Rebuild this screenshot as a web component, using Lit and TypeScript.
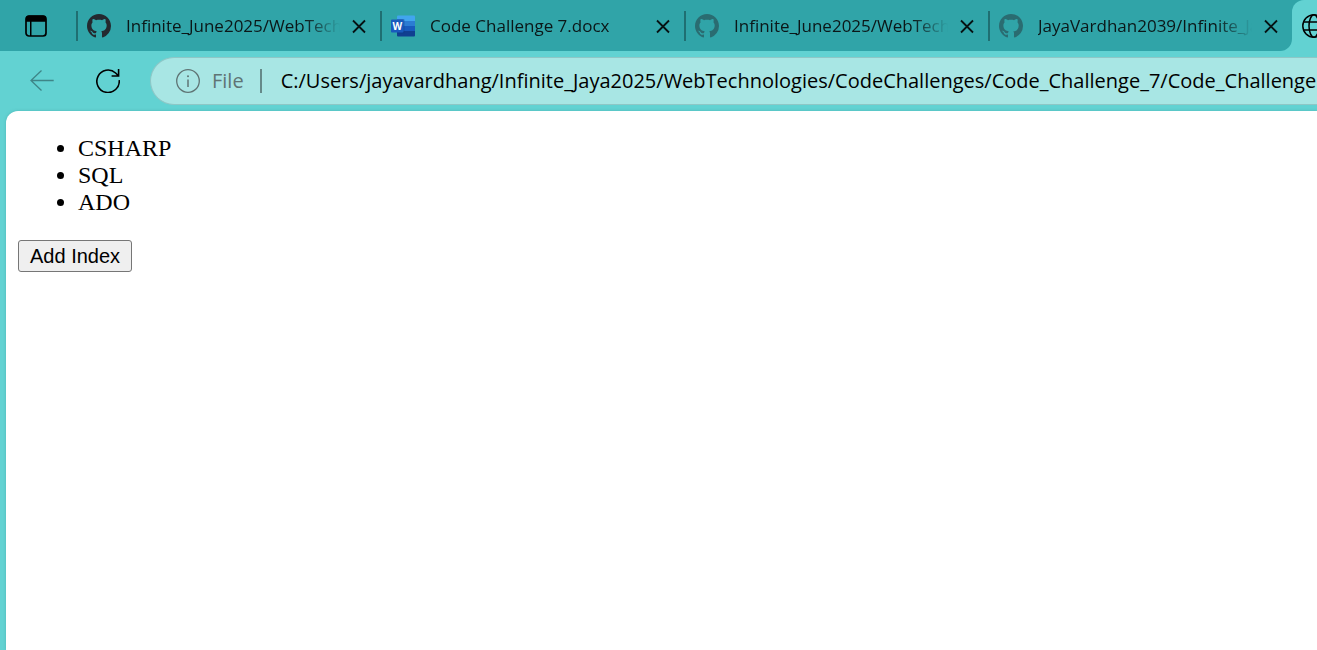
import { LitElement, html, css, svg } from "lit";
import { customElement, property, state } from "lit/decorators.js";
import { classMap } from "lit/directives/class-map.js";

const githubIcon = html`<svg class="favicon" viewBox="0 0 16 16" aria-hidden="true">
  <path
    fill="#24292f"
    d="M8 0C3.58 0 0 3.58 0 8c0 3.54 2.29 6.53 5.47 7.59.4.07.55-.17.55-.38 0-.19-.01-.82-.01-1.49-2.01.37-2.53-.49-2.69-.94-.09-.23-.48-.94-.82-1.13-.28-.15-.68-.52-.01-.53.63-.01 1.08.58 1.23.82.72 1.21 1.87.87 2.33.66.07-.52.28-.87.51-1.07-1.78-.2-3.64-.89-3.64-3.95 0-.87.31-1.59.82-2.15-.08-.2-.36-1.02.08-2.12 0 0 .67-.21 2.2.82.64-.18 1.32-.27 2-.27s1.36.09 2 .27c1.53-1.04 2.2-.82 2.2-.82.44 1.1.16 1.92.08 2.12.51.56.82 1.27.82 2.15 0 3.07-1.87 3.75-3.65 3.95.29.25.54.73.54 1.48 0 1.07-.01 1.93-.01 2.2 0 .21.15.46.55.38A8.01 8.01 0 0 0 16 8c0-4.42-3.58-8-8-8z"
  />
</svg>`;

const wordIcon = html`<svg class="favicon" viewBox="0 0 24 24" aria-hidden="true">
  <path fill="#41a5ee" d="M7 1.500h16a1 1 0 0 1 1 1v5H6v-5a1 1 0 0 1 1-1z" />
  <path fill="#2b7cd3" d="M6 7h18v5.500H6z" />
  <path fill="#185abd" d="M6 12h18v5H6z" />
  <path fill="#103f91" d="M6 17h18v4.500a1 1 0 0 1-1 1H7a1 1 0 0 1-1-1z" />
  <path fill="#0c3c82" opacity="0.400" d="M6 5h6.500a1 1 0 0 1 1 1v12.500a1 1 0 0 1-1 1H6z" />
  <rect fill="#185abd" y="5.500" width="12.500" height="13" rx="1" />
  <text x="6.250" y="15.500" text-anchor="middle" font-family="Open Sans, sans-serif" font-weight="700" font-size="10" fill="#fff">W</text>
</svg>`;

const stroke = (paths: unknown, size: string) => html`<svg
  class=${size}
  viewBox="0 0 24 24"
  fill="none"
  stroke="currentColor"
  aria-hidden="true"
>${paths}</svg>`;

const closeIcon = stroke(svg`<path stroke-width="1.800" d="M6 6.500l12 12M18 6.500l-12 12"/>`, "icon");
const backIcon = stroke(svg`<path stroke-width="1.300" d="M23.700 11.500H.8M11.500 1.500L1 11.500 11.500 21.500"/>`, "icon");
const reloadIcon = stroke(
  svg`<path stroke-width="1.600" d="M23.200 11.200A11.200 11.200 0 1 1 19.600 4L22.400 6.800M22.600 0v7h-7"/>`,
  "icon"
);
const infoIcon = stroke(
  svg`<circle cx="12" cy="12" r="11.300" stroke-width="1.300"/><path stroke-width="1.500" d="M12 10.500v7.500"/><circle cx="12" cy="7.300" r="1" fill="currentColor" stroke="none"/>`,
  "icon"
);
const globeIcon = stroke(
  svg`<g stroke-width="1.500"><circle cx="12" cy="12" r="11.200"/><ellipse cx="12" cy="12" rx="5" ry="11.200"/><path d="M1.800 8h20.400M1.800 16h20.400"/></g>`,
  "icon"
);
const panesIcon = html`<svg class="panes" viewBox="0 0 22 22" aria-hidden="true">
  <rect x="1" y="1" width="20" height="20" rx="3" fill="none" stroke="currentColor" stroke-width="1.700" />
  <path fill="currentColor" d="M1 6.800V3.500a3 3 0 0 1 3-3h14a3 3 0 0 1 3 3v3.300zM5 6h1.500v15H5z" />
</svg>`;

@customElement("browser-tab")
class BrowserTab extends LitElement {
  @property() label = "";
  @property() kind = "github";
  @property({ type: Boolean }) dim = false;

  static styles = css`
    :host {
      display: flex;
      flex: none;
      width: 304px;
      align-items: center;
      box-sizing: border-box;
      padding-right: 9px;
      gap: 7px;
    }
    .divider {
      width: 2px;
      height: 30px;
      background: #1f6f72;
    }
    .open {
      display: flex;
      flex: 1;
      min-width: 0;
      align-items: center;
      gap: 15px;
      padding: 0 0 0 2px;
      border: 0;
      background: none;
      color: #0b1718;
      font: 17px/26px "Open Sans", "Noto Sans", sans-serif;
      text-align: left;
    }
    .favicon {
      flex: none;
      width: 24px;
      height: 24px;
    }
    .dim .favicon {
      opacity: 0.45;
    }
    .label {
      flex: 1;
      min-width: 0;
      overflow: hidden;
      white-space: nowrap;
      mask-image: linear-gradient(to right, #000 calc(100% - 36px), transparent);
    }
    .close {
      display: flex;
      padding: 0;
      border: 0;
      background: none;
      color: #061213;
    }
    .icon {
      width: 24px;
      height: 24px;
    }
  `;

  render() {
    return html`<span class="divider"></span>
      <button class=${classMap({ open: true, dim: this.dim })}>
        ${this.kind === "word" ? wordIcon : githubIcon}<span class="label">${this.label}</span>
      </button>
      <button class="close" aria-label="Close tab">${closeIcon}</button>`;
  }
}

@customElement("app-root")
class AppRoot extends LitElement {
  @state() private items = ["CSHARP", "SQL", "ADO"];

  static styles = css`
    :host {
      display: flex;
      flex-direction: column;
      min-height: 100vh;
      overflow: hidden;
      background: #62d2d2;
      color: #000;
    }
    button {
      margin: 0;
    }
    .strip {
      display: flex;
      height: 51px;
    }
    .tabs {
      display: flex;
      flex: none;
      background: #30a4a8;
      border-radius: 0 0 12px 0;
    }
    .tool {
      display: flex;
      align-items: center;
      justify-content: center;
      padding: 0;
      border: 0;
      background: none;
      color: #000;
    }
    .menu {
      width: 76px;
      padding-right: 4px;
    }
    .current {
      flex: 1;
      min-width: 0;
      overflow: hidden;
      background: linear-gradient(#30a4a8 50%, transparent 50%);
    }
    .active {
      width: 304px;
      height: 51px;
      justify-content: flex-start;
      padding-left: 10px;
      background: #62d2d2;
      border-radius: 12px 0 0 0;
    }
    .bar {
      display: flex;
      align-items: center;
      height: 60px;
      padding-left: 30px;
    }
    .nav {
      display: flex;
      gap: 42px;
      margin-right: 30px;
    }
    .icon {
      flex: none;
      width: 24px;
      height: 24px;
    }
    .panes {
      width: 22px;
      height: 22px;
    }
    .back {
      color: #3e8587;
    }
    .address {
      display: flex;
      flex: 1;
      align-items: center;
      box-sizing: border-box;
      height: 48px;
      min-width: 0;
      padding-left: 25px;
      border: 1px solid #8ec7c6;
      border-right: 0;
      border-radius: 24px 0 0 24px;
      background: #a8e6e4;
      font: 20px/28px "Open Sans", "Noto Sans", sans-serif;
    }
    .scheme {
      display: flex;
      align-items: center;
      gap: 12px;
      margin-right: 16px;
      color: #5f7474;
    }
    .rule {
      width: 2px;
      height: 24px;
      margin-right: 19px;
      background: #658a89;
    }
    .url {
      flex: 1;
      min-width: 0;
      padding: 0;
      border: 0;
      outline: 0;
      background: none;
      color: #000;
      font: inherit;
    }
    .page {
      flex: 1;
      margin-left: 6px;
      padding: 0 12px;
      border-radius: 12px 0 0 0;
      background: #fff;
      box-shadow: 0 0 3px #3a9a9a80;
      font: 24px/27px "Liberation Serif", serif;
    }
    .list {
      margin: 24px 0;
      padding-left: 60px;
    }
    .add {
      display: block;
      height: 32px;
      padding: 0 11px;
      border: 1px solid #767676;
      border-radius: 3px;
      background: #efefef;
      color: #000;
      font: 20px/28px "Liberation Sans", sans-serif;
    }
  `;

  render() {
    return html`
      <header>
        <div class="strip">
          <div class="tabs">
            <button class="tool menu" aria-label="Tab actions">${panesIcon}</button>
            <browser-tab label="Infinite_June2025/WebTechnologies"></browser-tab>
            <browser-tab kind="word" label="Code Challenge 7.docx"></browser-tab>
            <browser-tab dim label="Infinite_June2025/WebTechnologies"></browser-tab>
            <browser-tab dim label="JayaVardhan2039/Infinite_Jaya2025"></browser-tab>
          </div>
          <div class="current">
            <button class="tool active" aria-label="Current tab">${globeIcon}</button>
          </div>
        </div>
        <div class="bar">
          <nav class="nav">
            <button class="tool back" aria-label="Back">${backIcon}</button>
            <button class="tool" aria-label="Reload">${reloadIcon}</button>
          </nav>
          <div class="address">
            <label class="scheme" for="url">${infoIcon}<span>File</span></label>
            <span class="rule"></span>
            <input
              id="url"
              class="url"
              type="text"
              spellcheck="false"
              .value=${"C:/Users/jayavardhang/Infinite_Jaya2025/WebTechnologies/CodeChallenges/Code_Challenge_7/Code_Challenge"}
            />
          </div>
        </div>
      </header>
      <main class="page">
        <ul class="list">
          ${this.items.map((item) => html`<li>${item}</li>`)}
        </ul>
        <button class="add">Add Index</button>
      </main>
    `;
  }
}
